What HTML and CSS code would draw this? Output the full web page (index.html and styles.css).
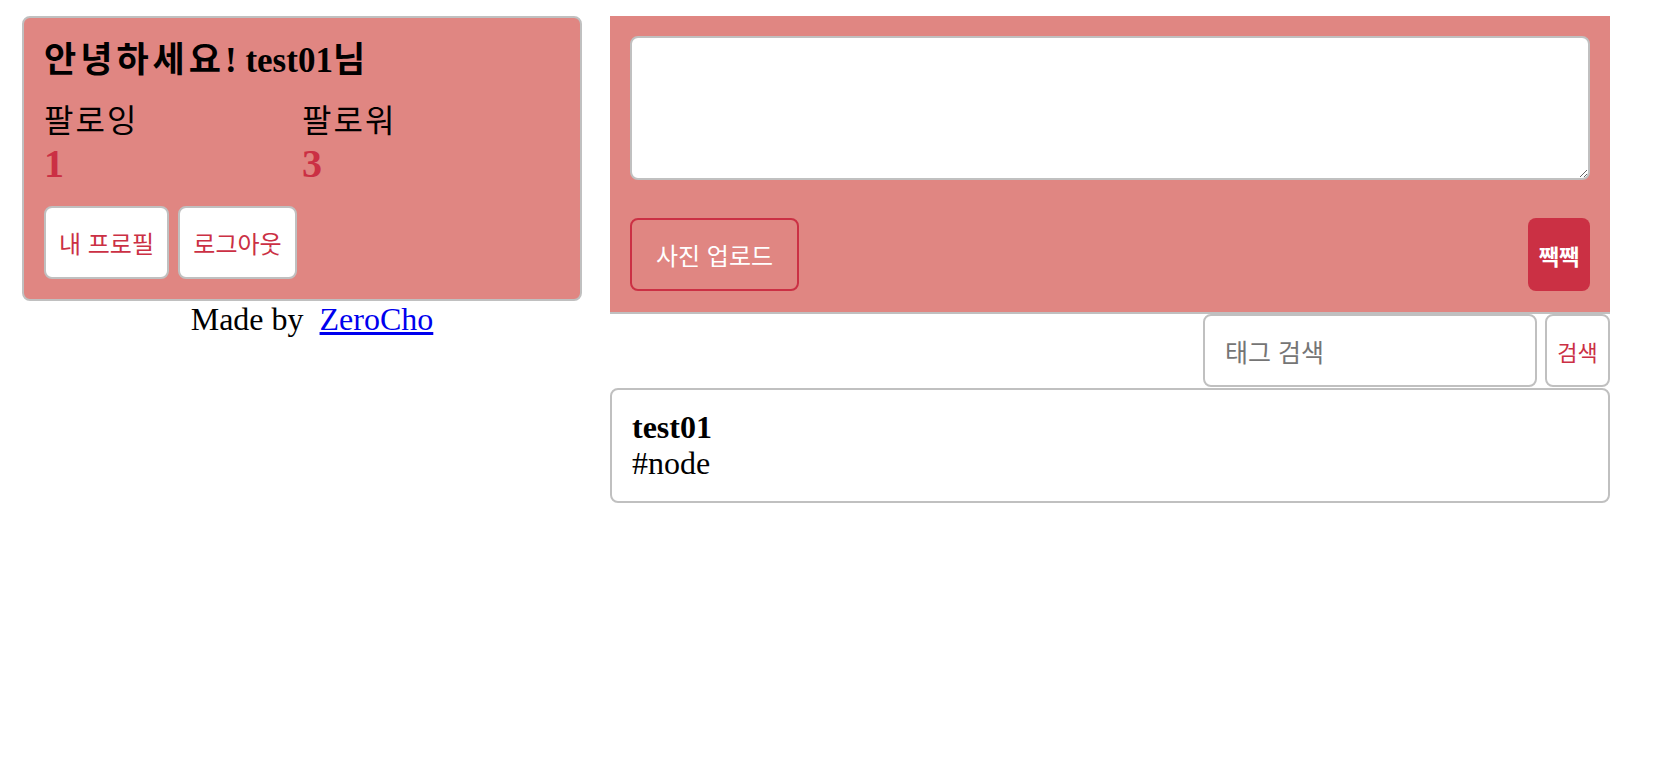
FILE: index.html
```html
<!DOCTYPE html>
<html lang="ko">
<head>
<meta charset="utf-8">
<title>NodeBird</title>
<link rel="stylesheet" href="styles.css">
</head>
<body>
<div class="container">
  <div class="profile-wrap">
    <div class="profile">
      <div class="user-name"><span class="ko">안녕하세요</span>! test01<span class="ko">님</span></div>
      <div class="stats">
        <div class="half">
          <div class="label">팔로잉</div>
          <div class="count">1</div>
        </div>
        <div class="half">
          <div class="label">팔로워</div>
          <div class="count">3</div>
        </div>
      </div>
      <div class="actions">
        <a class="btn btn-profile" href="#">내 프로필</a>
        <a class="btn btn-logout" href="#">로그아웃</a>
      </div>
    </div>
    <footer class="footer">Made by&nbsp; <a class="footer-link" href="#">ZeroCho</a></footer>
  </div>
  <main class="main">
    <form class="twit-form">
      <textarea class="twit-input"></textarea>
      <div class="twit-actions">
        <label class="img-label">사진 업로드</label>
        <button class="twit-btn" type="button">짹짹</button>
      </div>
    </form>
    <form class="hashtag-form">
      <input class="hashtag-input" type="text" placeholder="태그 검색">
      <button class="search-btn" type="button">검색</button>
    </form>
    <div class="twit">
      <div class="twit-author">test01</div>
      <div class="twit-content">#node</div>
    </div>
  </main>
</div>
</body>
</html>
```

FILE: styles.css
```css
* { box-sizing: border-box; }

html, body {
  margin: 0;
  padding: 0;
  background: #ffffff;
}

body {
  font-family: "Liberation Serif", "Noto Sans CJK KR", serif;
  font-size: 32px;
  color: #000000;
}

.container {
  display: flex;
  align-items: flex-start;
  gap: 8px;
  padding: 16px 0 0 22px;
}

/* ---------- left column ---------- */
.profile-wrap {
  width: 580px;
  flex: none;
}

.profile {
  width: 560px;
  padding: 20px 20px 20px 20px;
  border: 2px solid #c0c0c0;
  border-radius: 8px;
  background: #e08682;
}

.user-name {
  font-size: 35px;
  font-weight: bold;
  line-height: 46px;
  white-space: nowrap;
}

.user-name .ko {
  letter-spacing: 4px;
}

.stats {
  display: flex;
  margin-top: 20px;
}

.half {
  width: 50%;
}

.label {
  line-height: 34px;
  letter-spacing: 2px;
}

.count {
  font-size: 40px;
  font-weight: bold;
  line-height: 52px;
  color: #cb3044;
}

.actions {
  display: flex;
  gap: 9px;
  margin-top: 16px;
}

.btn {
  display: block;
  height: 73px;
  line-height: 69px;
  padding: 0 10px;
  border: 2px solid #c0c0c0;
  border-radius: 8px;
  background: #ffffff;
  color: #cb3044;
  font-family: "Noto Sans CJK KR", sans-serif;
  font-size: 24px;
  text-align: center;
  text-decoration: none;
  white-space: nowrap;
}

.btn-profile { width: 125px; }
.btn-logout { width: 119px; }

.footer {
  text-align: center;
  line-height: 37px;
}

.footer-link {
  color: #0000ee;
  text-decoration: underline;
}

/* ---------- right column ---------- */
.main {
  width: 1000px;
  flex: none;
}

.twit-form {
  margin: 0;
  padding: 20px 20px 21px 20px;
  background: #e08682;
  border-bottom: 2px solid #c0c0c0;
}

.twit-input {
  display: block;
  width: 100%;
  height: 144px;
  margin: 0 0 38px 0;
  padding: 10px;
  border: 2px solid #c0c0c0;
  border-radius: 8px;
  background: #ffffff;
  font-family: "Liberation Mono", monospace;
  font-size: 26px;
}

.twit-actions {
  display: flex;
  justify-content: space-between;
  align-items: flex-start;
}

.img-label {
  display: block;
  width: 169px;
  height: 73px;
  line-height: 69px;
  padding: 0 10px;
  border: 2px solid #cb3044;
  border-radius: 8px;
  color: #ffffff;
  font-family: "Noto Sans CJK KR", sans-serif;
  font-size: 24px;
  text-align: center;
  white-space: nowrap;
}

.twit-btn {
  width: 62px;
  height: 73px;
  padding: 0;
  border: 0;
  border-radius: 8px;
  background: #cb3044;
  color: #ffffff;
  font-family: "Noto Sans CJK KR", sans-serif;
  font-size: 22px;
  font-weight: bold;
}

.hashtag-form {
  display: flex;
  justify-content: flex-end;
  gap: 8px;
  margin: 0;
}

.hashtag-input {
  width: 334px;
  height: 73px;
  padding: 0 20px;
  border: 2px solid #c0c0c0;
  border-radius: 8px;
  background: #ffffff;
  font-family: "Noto Sans CJK KR", sans-serif;
  font-size: 25px;
  color: #000000;
}

.hashtag-input::placeholder {
  color: #757575;
}

.search-btn {
  width: 65px;
  height: 73px;
  padding: 0;
  border: 2px solid #c0c0c0;
  border-radius: 8px;
  background: #ffffff;
  color: #cb3044;
  font-family: "Noto Sans CJK KR", sans-serif;
  font-size: 22px;
}

.twit {
  margin-top: 1px;
  padding: 19px 20px 20px 20px;
  border: 2px solid #c0c0c0;
  border-radius: 8px;
  line-height: 36px;
}

.twit-author {
  font-weight: bold;
}
```
